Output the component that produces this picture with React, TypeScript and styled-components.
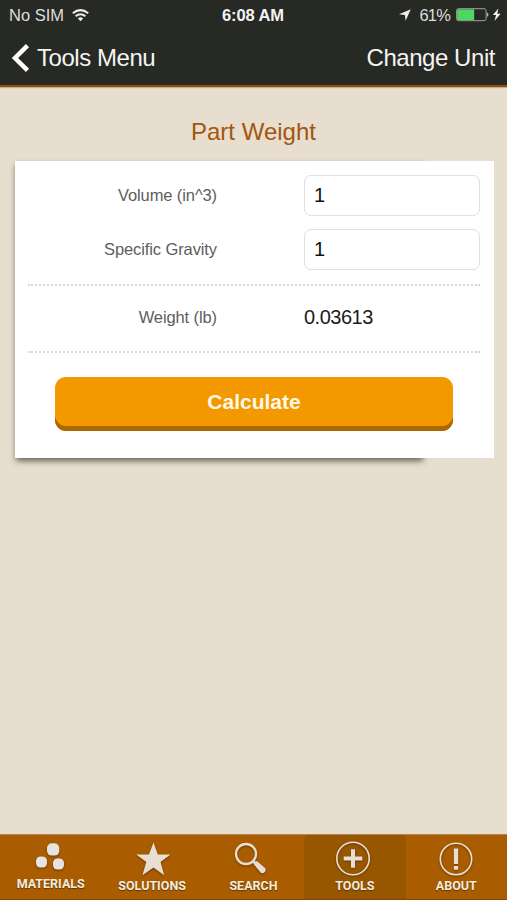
import React from "react";
import styled, { createGlobalStyle } from "styled-components";

const GlobalStyle = createGlobalStyle`
  * { box-sizing: border-box; }
  body { margin: 0; background: #e7decf; }
`;

const Screen = styled.div`
  display: flex;
  flex-direction: column;
  width: 507px;
  height: 900px;
  overflow: hidden;
  background: #e7decf;
  font-family: "Liberation Sans", Arial, sans-serif;
`;

const Header = styled.header`
  height: 87px;
  flex: none;
  background: #272925;
  color: #f4f4f2;
  border-bottom: 2px solid #875012;
  box-shadow: 0 1px 1px #c9ad86;
`;

const StatusBar = styled.div`
  display: grid;
  grid-template-columns: 1fr auto 1fr;
  align-items: center;
  height: 30px;
  padding: 0 6px 0 9px;
  font-size: 16px;
  line-height: 30px;
`;

const StatusGroup = styled.div<{ $end?: boolean }>`
  display: flex;
  align-items: center;
  justify-content: ${(p) => (p.$end ? "flex-end" : "flex-start")};
  color: #dededb;
`;

const Clock = styled.div`
  margin-right: 4px;
  font-weight: bold;
  font-size: 16.5px;
  letter-spacing: -0.1px;
`;

const Carrier = styled.span`
  margin-right: 8px;
  font-size: 16.5px;
`;

const Percent = styled.span`
  margin: 0 6px 0 8px;
  font-size: 16.5px;
  letter-spacing: -0.8px;
`;

const NavBar = styled.nav`
  display: flex;
  align-items: center;
  justify-content: space-between;
  height: 55px;
  padding: 0 12px 0 11px;
`;

const NavButton = styled.button`
  display: flex;
  align-items: center;
  gap: 7px;
  padding: 0;
  border: 0;
  background: none;
  color: #f4f4f2;
  font: 24px/28px "Liberation Sans", Arial, sans-serif;
  letter-spacing: -0.45px;
`;

const Content = styled.main`
  flex: 1;
  padding: 0 13.5px 0 14.5px;
`;

const Title = styled.h1`
  margin: 30px 1px 15px 0;
  color: #a3560d;
  font-size: 24px;
  font-weight: normal;
  line-height: 29px;
  text-align: center;
`;

const Card = styled.section`
  position: relative;
  z-index: 0;
  height: 297px;
  padding: 14px 14px 0 13.5px;

  &::before {
    content: "";
    position: absolute;
    z-index: -2;
    inset: 5px 74px 2px 4px;
    box-shadow: 0 1.5px 6px 3px rgba(45, 40, 32, 0.68);
  }

  &::after {
    content: "";
    position: absolute;
    z-index: -1;
    inset: 0;
    background: #fff;
  }
`;

const Row = styled.div<{ $height: number }>`
  display: grid;
  grid-template-columns: 189px 175px;
  column-gap: 87px;
  align-items: center;
  height: ${(p) => p.$height}px;
`;

const FieldLabel = styled.label`
  color: #5d5d5d;
  font-size: 16.5px;
  letter-spacing: -0.1px;
  text-align: right;
  white-space: nowrap;
`;

const Field = styled.input`
  width: 176px;
  height: 41px;
  padding: 0 9px;
  border: 1px solid #e0e0e0;
  border-radius: 7px;
  outline: 0;
  background: #fff;
  color: #111;
  font: 20px "Liberation Sans", Arial, sans-serif;
`;

const Result = styled.output`
  color: #1b1b1b;
  font-size: 20px;
  letter-spacing: -0.5px;
`;

const Inputs = styled.div`
  display: grid;
  row-gap: 13px;
  height: 109px;
  align-content: start;
`;

const ResultBand = styled.div`
  padding-bottom: 2px;
  border-top: 2px dotted #d6d6d6;
  border-bottom: 2px dotted #d6d6d6;
`;

const CalculateButton = styled.button`
  display: block;
  width: 398px;
  height: 54px;
  margin: 24px 0 0 27px;
  padding: 0 0 5px;
  border: 0;
  border-radius: 11px;
  background: #f49800;
  box-shadow: inset 0 -5px #ab6800;
  color: #fff8e9;
  font: bold 21px "Liberation Sans", Arial, sans-serif;
`;

const TabBar = styled.footer`
  display: grid;
  grid-template-columns: repeat(5, 1fr);
  flex: none;
  height: 66px;
  background: #aa5d00;
  border-top: 1px solid #b4834d;
  border-bottom: 1px solid #814203;
`;

const Tab = styled.div<{ $active?: boolean }>`
  display: flex;
  flex-direction: column;
  align-items: center;
  padding-top: 5px;
  border-radius: 5px 5px 0 0;
  background: ${(p) => (p.$active ? "#965700" : "transparent")};
  color: #f4ebdf;
  font: bold 12.5px/15px Roboto, sans-serif;
  text-shadow: 0 1px 1px #603300;
`;

const TabIcon = styled.span<{ $nudge?: number; $height?: number }>`
  display: block;
  height: ${(p) => p.$height ?? 38}px;
  margin-left: ${(p) => p.$nudge ?? 0}px;

  svg {
    display: block;
    overflow: visible;
    filter: drop-shadow(0 1px 1px #693800);
  }
`;

const ink = "#e9ded3";

const WifiIcon = () => (
  <svg width="17" height="13" viewBox="0 0 17 13" fill="none" stroke="#ededeb" strokeWidth="2">
    <path d="M.8 4.3Q8.5-2 16.2 4.3M3.6 7.3q4.9-4 9.8 0" />
    <path d="M5.8 9.4q2.7-2.2 5.4 0L8.5 12.3z" fill="#ededeb" stroke="none" />
  </svg>
);

const LocationIcon = () => (
  <svg width="12" height="12" viewBox="0 0 12 12" fill="#ededeb">
    <path d="M11.8.2 0 5.2l5.9.7.7 5.9z" />
  </svg>
);

const BatteryIcon = () => (
  <svg width="45" height="14" viewBox="0 0 45 14">
    <rect x=".6" y=".7" width="29.5" height="12" rx="2" fill="none" stroke="#a2a4a0" />
    <path d="M1.2 1.3h17v10.8h-17z" fill="#4ed763" />
    <path d="M31 4.5q3 2.2 0 4.4z" fill="#b7b9b5" />
    <path d="m42.4.6-5.6 6.5h3.3l-1.6 5.8 6.1-7.1h-3.3z" fill="#f2f2f0" />
  </svg>
);

const BackIcon = () => (
  <svg width="19" height="28" viewBox="0 0 19 28" fill="none" stroke="#fff" strokeWidth="4.5">
    <path d="M16.5 1.7 4 14l12.5 12.3" />
  </svg>
);

const MaterialsIcon = () => (
  <svg width="30" height="36" viewBox="0 0 30 36" fill="#e8e3e1">
    <rect x="12" y="3.3" width="12.3" height="12.3" rx="4.8" />
    <rect x="1" y="16.5" width="11" height="11" rx="4.5" />
    <rect x="18" y="18.5" width="11" height="11" rx="4.5" />
  </svg>
);

const StarIcon = () => (
  <svg width="36" height="36" viewBox="0 0 36 36" fill={ink}>
    <path d="m18.5 2.5 4.3 12H35.5l-10 7.5 3.7 13.3-10.7-7.7L7.4 35.3 11.3 22 1.2 14.5h12.7z" />
  </svg>
);

const SearchIcon = () => (
  <svg width="34" height="36" viewBox="0 0 34 36" fill="none" stroke={ink}>
    <circle cx="12" cy="14" r="10" strokeWidth="2.3" />
    <path d="m19 21 4 4" strokeWidth="2.7" />
    <path d="m23.4 21.6 7.6 6.4c2.4 2.4-2 7-4.4 4.4l-6.2-7.3c-1.1-1.6 1.5-4.7 3-3.5z" fill={ink} stroke="none" />
  </svg>
);

const PlusIcon = () => (
  <svg width="34" height="36" viewBox="0 0 34 36" fill="none" stroke={ink}>
    <circle cx="17" cy="18.5" r="16.2" strokeWidth="1.6" />
    <path d="M7.7 18.5h18.6M17 9.2v18.6" strokeWidth="4" />
  </svg>
);

const AboutIcon = () => (
  <svg width="34" height="36" viewBox="0 0 34 36" fill="none" stroke={ink}>
    <circle cx="17" cy="19" r="15.7" strokeWidth="1.6" />
    <path d="M17 8.5v15.5M17 26v3.8" strokeWidth="4.3" />
  </svg>
);

export default function App() {
  return (
    <Screen>
      <GlobalStyle />
      <Header>
        <StatusBar>
          <StatusGroup><Carrier>No SIM</Carrier><WifiIcon /></StatusGroup>
          <Clock>6:08 AM</Clock>
          <StatusGroup $end><LocationIcon /><Percent>61%</Percent><BatteryIcon /></StatusGroup>
        </StatusBar>
        <NavBar>
          <NavButton><BackIcon />Tools Menu</NavButton>
          <NavButton>Change Unit</NavButton>
        </NavBar>
      </Header>
      <Content>
        <Title>Part Weight</Title>
        <Card>
          <Inputs>
            <Row $height={41}>
              <FieldLabel htmlFor="volume">Volume (in^3)</FieldLabel>
              <Field id="volume" defaultValue="1" />
            </Row>
            <Row $height={41}>
              <FieldLabel htmlFor="gravity">Specific Gravity</FieldLabel>
              <Field id="gravity" defaultValue="1" />
            </Row>
          </Inputs>
          <ResultBand>
            <Row $height={63}>
              <FieldLabel as="span">Weight (lb)</FieldLabel>
              <Result>0.03613</Result>
            </Row>
          </ResultBand>
          <CalculateButton>Calculate</CalculateButton>
        </Card>
      </Content>
      <TabBar>
        <Tab><TabIcon $nudge={-2} $height={36}><MaterialsIcon /></TabIcon>MATERIALS</Tab>
        <Tab><TabIcon $nudge={1}><StarIcon /></TabIcon>SOLUTIONS</Tab>
        <Tab><TabIcon $nudge={-4}><SearchIcon /></TabIcon>SEARCH</Tab>
        <Tab $active><TabIcon $nudge={-3}><PlusIcon /></TabIcon>TOOLS</Tab>
        <Tab><TabIcon><AboutIcon /></TabIcon>ABOUT</Tab>
      </TabBar>
    </Screen>
  );
}
